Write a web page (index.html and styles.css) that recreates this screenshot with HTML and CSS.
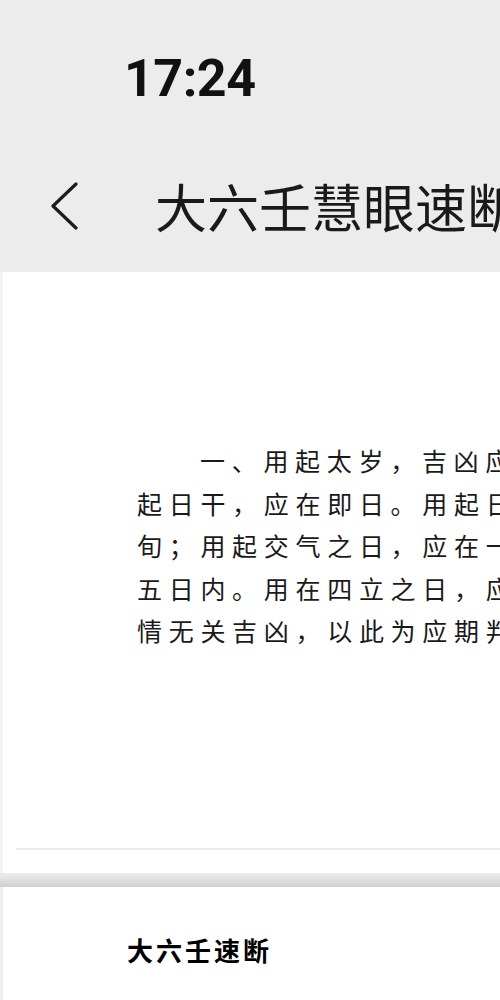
FILE: index.html
```html
<!DOCTYPE html>
<html lang="zh-CN">
<head>
<meta charset="utf-8">
<title>大六壬慧眼速断</title>
<link rel="stylesheet" href="styles.css">
</head>
<body>
<div class="screen">
  <header class="header">
    <div class="status">17:24</div>
    <div class="nav">
      <svg class="back" width="28" height="48" viewBox="0 0 28 48" aria-hidden="true">
        <polyline points="26,2 3,24 26,46" fill="none" stroke="#1c1c1c" stroke-width="3.2" stroke-linecap="round" stroke-linejoin="round"/>
      </svg>
      <div class="title">大六壬慧眼速断</div>
    </div>
  </header>
  <main class="page">
    <div class="scan">
      <div class="line indent">一、用起太岁，吉凶应在</div>
      <div class="line">起日干，应在即日。用起日</div>
      <div class="line">旬；用起交气之日，应在一</div>
      <div class="line">五日内。用在四立之日，应</div>
      <div class="line">情无关吉凶，以此为应期判</div>
    </div>
    <div class="rule"></div>
  </main>
  <div class="gap"></div>
  <section class="page2">
    <div class="book-title">大六壬速断</div>
  </section>
</div>
</body>
</html>
```

FILE: styles.css
```css
html, body {
  margin: 0;
  padding: 0;
  background: #ffffff;
}
.screen {
  width: 500px;
  height: 1000px;
  overflow: hidden;
  font-family: "Noto Sans CJK SC", "Noto Sans", sans-serif;
}
.header {
  background: #ececec;
  height: 272px;
  box-sizing: border-box;
  padding-top: 53px;
  overflow: hidden;
}
.status {
  font-family: Roboto, "Liberation Sans", sans-serif;
  font-weight: 700;
  font-size: 52px;
  line-height: 52px;
  color: #111111;
  padding-left: 124px;
  letter-spacing: -0.5px;
}
.nav {
  display: flex;
  align-items: center;
  margin-top: 75px;
  height: 52px;
  white-space: nowrap;
}
.back {
  margin-left: 50px;
  flex: none;
}
.title {
  margin-left: 77px;
  font-size: 52px;
  line-height: 52px;
  color: #1a1a1a;
  font-weight: 400;
  flex: none;
}
.page {
  height: 601px;
  box-sizing: border-box;
  padding-top: 167px;
  border-left: 3px solid #f3f3f3;
  overflow: hidden;
}
.scan {
  font-family: "Noto Sans CJK SC", serif;
  font-size: 25px;
  line-height: 42.5px;
  letter-spacing: 6.7px;
  color: #1a1a1a;
  white-space: nowrap;
  padding-left: 134px;
}
.line.indent {
  padding-left: 63px;
}
.rule {
  margin-top: 196px;
  margin-left: 13px;
  height: 2px;
  background: #ececec;
}
.gap {
  height: 14px;
  background: linear-gradient(#eeeeee, #e2e2e2 40%, #cfcfcf);
}
.page2 {
  height: 113px;
  border-left: 3px solid #f0f0f0;
  box-sizing: border-box;
  padding-top: 48px;
}
.book-title {
  padding-left: 124px;
  font-size: 26px;
  line-height: 30px;
  font-weight: 700;
  letter-spacing: 3px;
  color: #000000;
}
```
